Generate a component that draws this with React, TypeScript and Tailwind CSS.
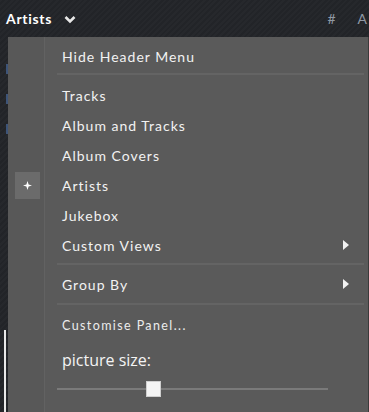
import React from 'react';

const items = ['Tracks', 'Album and Tracks', 'Album Covers', 'Artists', 'Jukebox'];

function Arrow() {
  return (
    <svg width="6" height="10" viewBox="0 0 6 10" className="mr-[19px]">
      <path d="M0 0 L6 5 L0 10 Z" fill="#f2f2f2" />
    </svg>
  );
}

function Row({ label, checked, sub }: { label: string; checked?: boolean; sub?: boolean }) {
  return (
    <div className="flex h-[30px] items-center">
      <div className="flex w-[37px] justify-center">
        {checked && (
          <div className="ml-[1px] flex h-[27px] w-[25px] items-center justify-center bg-[#6b6b6b]">
            <svg width="9" height="9" viewBox="0 0 9 9">
              <path d="M4.5 0 L5.6 3.4 L9 4.5 L5.6 5.6 L4.5 9 L3.4 5.6 L0 4.5 L3.4 3.4 Z" fill="#fff" />
            </svg>
          </div>
        )}
      </div>
      <div className="ml-[17px] flex flex-1 items-center justify-between">
        <span>{label}</span>
        {sub && <Arrow />}
      </div>
    </div>
  );
}

function Sep() {
  return <div className="ml-[49px] mr-[4px] h-[2px] bg-[#646464]" />;
}

export default function App() {
  return (
    <div className="relative h-[412px] w-[369px] overflow-hidden bg-[repeating-linear-gradient(135deg,#26282c_0px,#26282c_2px,#222428_2px,#222428_4px)] font-['Lato',sans-serif]">
      <div className="flex h-[37px] items-center pl-[6px] pr-[2px] text-white">
        <span className="text-[14px] font-bold tracking-[0.7px]">Artists</span>
        <svg width="12" height="9" viewBox="0 0 12 9" className="ml-[12px] mt-[2px]">
          <path d="M1.5 2 L6 6.5 L10.5 2" stroke="#e8e8e8" strokeWidth="2.6" fill="none" />
        </svg>
        <span className="ml-auto mr-[22px] text-[14px] text-[#8f98a4]">#</span>
        <span className="text-[14px] text-[#8f98a4]">A</span>
      </div>
      <div className="absolute left-0 top-[330px] h-[82px] w-[2px] translate-x-[4px] bg-[#e8e8e8]" />
      <div className="absolute left-[6px] top-[64px] flex flex-col gap-[20px]">
        <div className="h-[10px] w-[2px] bg-[#3d5478]" />
        <div className="h-[10px] w-[2px] bg-[#3d5478]" />
        <div className="h-[10px] w-[2px] bg-[#3d5478]" />
      </div>
      <div className="absolute left-[8px] top-[37px] flex h-[375px] w-[361px] border-r border-[#3a3a3a] bg-[#5a5a5a] text-[14px] tracking-[1px] text-[#f2f2f2]">
        <div className="absolute left-0 top-0 h-full w-[37px] border-r border-[#626262] bg-[#585858]" />
        <div className="relative flex w-full flex-col">
          <div className="flex h-[36px] items-center pl-[54px] pt-[3px]">Hide Header Menu</div>
          <Sep />
          <div className="pt-[5px]">
            {items.map((it) => (
              <Row key={it} label={it} checked={it === 'Artists'} />
            ))}
            <Row label="Custom Views" sub />
          </div>
          <div className="mt-[3px]">
            <Sep />
          </div>
          <div className="pt-[4px]">
            <Row label="Group By" sub />
          </div>
          <div className="mt-[4px]">
            <Sep />
          </div>
          <div className="flex h-[36px] items-center pl-[54px] pt-[7px] text-[12.5px] tracking-[1.4px] text-[#ececec]">Customise Panel...</div>
          <div className="flex h-[35px] items-center pl-[54px] pt-[3px] font-['Open_Sans',sans-serif] text-[16px] tracking-normal text-[#f4f4f4]">picture size:</div>
          <div className="relative ml-[49px] mt-[5px] h-[16px] w-[271px]">
            <div className="absolute left-0 right-0 top-[7px] h-[2px] bg-[#7a7a7a]" />
            <div className="absolute left-[89px] top-0 h-[16px] w-[15px] border border-[#cfcfcf] bg-[#f4f4f4]" />
          </div>
        </div>
      </div>
    </div>
  );
}
